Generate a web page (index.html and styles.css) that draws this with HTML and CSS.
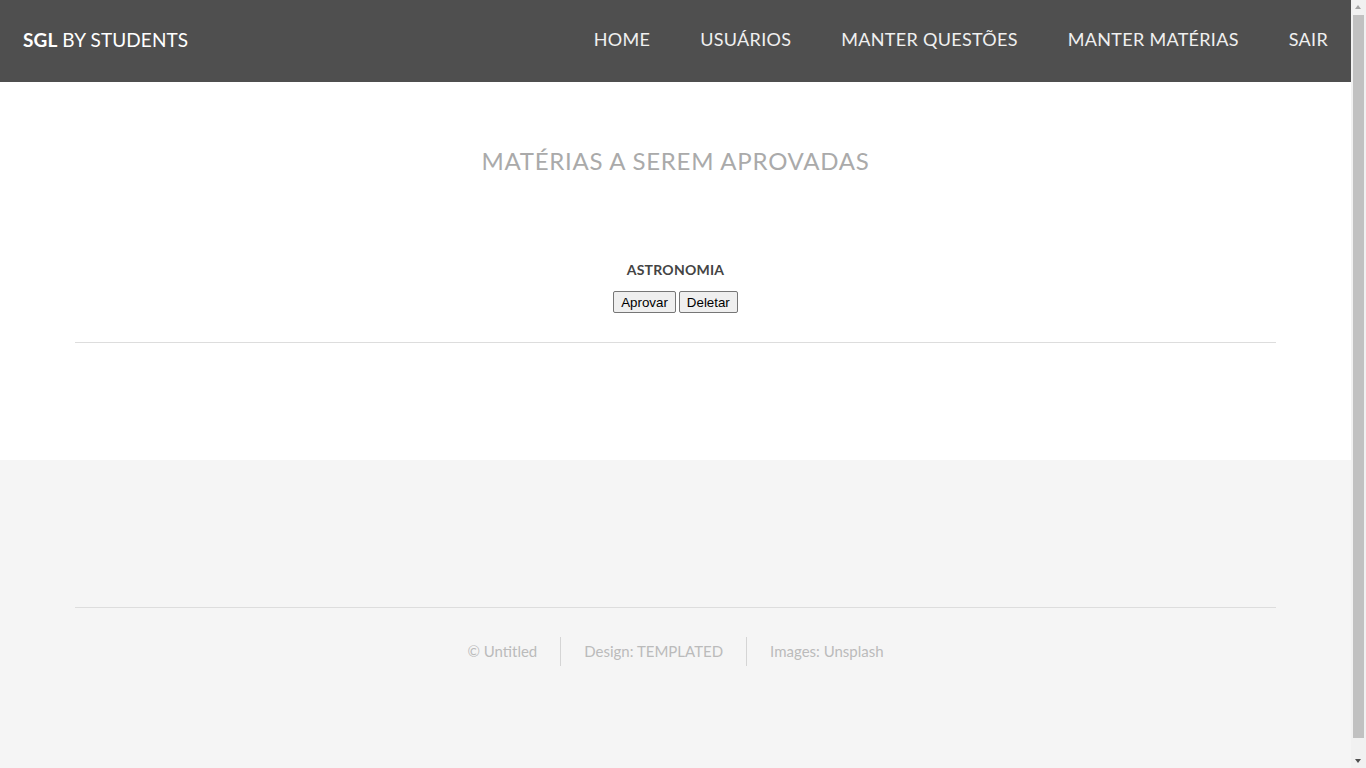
FILE: index.html
```html
<!DOCTYPE html>
<html lang="pt">
<head>
<meta charset="utf-8">
<title>SGL by Students</title>
<link rel="stylesheet" href="styles.css">
</head>
<body>
<header class="header">
  <div class="logo"><strong>SGL</strong> BY STUDENTS</div>
  <nav class="nav">
    <a href="#">HOME</a>
    <a href="#">USUÁRIOS</a>
    <a href="#">MANTER QUESTÕES</a>
    <a href="#">MANTER MATÉRIAS</a>
    <a href="#">SAIR</a>
  </nav>
</header>
<section class="main">
  <h2 class="title">MATÉRIAS A SEREM APROVADAS</h2>
  <div class="item">
    <h3 class="item-name">ASTRONOMIA</h3>
    <div class="actions">
      <button class="btn">Aprovar</button>
      <button class="btn">Deletar</button>
    </div>
  </div>
  <hr class="rule">
</section>
<footer class="footer">
  <hr class="rule">
  <ul class="copyright">
    <li>© Untitled</li>
    <li>Design: <a href="#">TEMPLATED</a></li>
    <li>Images: <a href="#">Unsplash</a></li>
  </ul>
</footer>
<div class="scrollbar" aria-hidden="true">
  <div class="sb-arrow sb-up"></div>
  <div class="sb-track"><div class="sb-thumb"></div></div>
  <div class="sb-arrow sb-down"></div>
</div>
</body>
</html>
```
FILE: styles.css
```css
html, body {
  margin: 0;
  padding: 0;
}
body {
  font-family: Lato, "Open Sans", sans-serif;
  background: #fff;
  color: #555;
  margin-right: 15px;
}
.header {
  height: 82px;
  background: #4f4f4f;
  display: flex;
  align-items: center;
  justify-content: space-between;
  padding: 0 23px 4px;
  box-sizing: border-box;
}
.logo {
  color: #fff;
  font-size: 19px;
  letter-spacing: 0.1px;
}
.logo strong {
  font-weight: 700;
}
.nav {
  display: flex;
  gap: 50px;
}
.nav a {
  color: #f0f0f0;
  text-decoration: none;
  font-size: 18px;
  letter-spacing: 0.3px;
}
.main {
  padding: 61px 75px 0;
  height: 317px;
}
.title {
  margin: 0;
  text-align: center;
  font-weight: 400;
  font-size: 24px;
  line-height: 36px;
  color: #aaaaaa;
  letter-spacing: 0.75px;
}
.item {
  margin-top: 81px;
  text-align: center;
}
.item-name {
  margin: 0;
  font-size: 14px;
  line-height: 20px;
  font-weight: 700;
  color: #444;
  letter-spacing: 0.25px;
}
.actions {
  margin-top: 11px;
  display: flex;
  justify-content: center;
  gap: 3px;
}
.btn {
  font-family: "Liberation Sans", Arial, sans-serif;
  font-size: 13.333px;
  height: 22px;
  padding: 1px 7px;
  color: #000;
  background: #efefef;
  border: 1px solid #767676;
  border-radius: 2px;
}
.rule {
  border: 0;
  border-top: 1px solid #dddddd;
  margin: 29px 0 0;
}
.footer {
  background: #f5f5f5;
  padding: 147px 75px 0;
  height: 177px;
}
.footer .rule {
  margin: 0;
}
.copyright {
  list-style: none;
  margin: 29px 0 0;
  padding: 0;
  display: flex;
  justify-content: center;
  font-size: 15px;
  line-height: 29px;
  color: #bbbbbb;
}
.copyright li {
  padding: 0 23px;
  border-left: 1px solid #d5d5d5;
}
.copyright li:first-child {
  border-left: 0;
}
.copyright a {
  color: #bbbbbb;
  text-decoration: none;
}
.scrollbar {
  position: fixed;
  top: 0;
  right: 0;
  width: 15px;
  height: 100vh;
  background: #f1f1f1;
  display: flex;
  flex-direction: column;
}
.sb-arrow {
  height: 15px;
  position: relative;
}
.sb-up::after,
.sb-down::after {
  content: "";
  position: absolute;
  left: 4px;
  border-left: 3.5px solid transparent;
  border-right: 3.5px solid transparent;
}
.sb-up::after {
  top: 5px;
  border-bottom: 4px solid #a3a3a3;
}
.sb-down::after {
  top: 6px;
  border-top: 4px solid #505050;
}
.sb-track {
  flex: 1;
  padding: 0 2px;
}
.sb-thumb {
  height: 723px;
  background: #c1c1c1;
}
```
